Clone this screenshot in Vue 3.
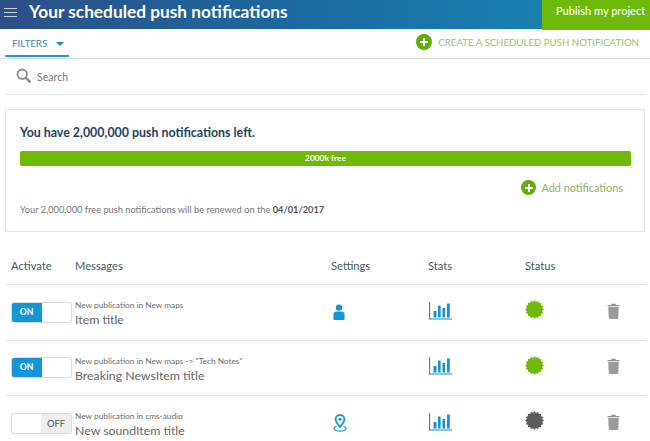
<template>
  <div class="page">
    <header class="topbar">
      <button class="burger" aria-label="Menu"><span></span><span></span><span></span></button>
      <h1 class="page-title">Your scheduled push notifications</h1>
      <button class="publish">Publish my project</button>
    </header>

    <div class="tabs">
      <div class="filters">FILTERS <i class="caret"></i></div>
      <div class="create">
        <span class="plus plus-big"></span>
        CREATE A SCHEDULED PUSH NOTIFICATION
      </div>
    </div>

    <div class="search">
      <svg width="15" height="15" viewBox="0 0 16 16" class="search-icon">
        <circle cx="6.6" cy="6.6" r="5" fill="none" stroke="#8c8c8c" stroke-width="2" />
        <path d="M10.4 10.4 L14.6 14.6" stroke="#8c8c8c" stroke-width="2.6" stroke-linecap="round" />
      </svg>
      <span>Search</span>
    </div>

    <section class="quota">
      <h2 class="quota-title">You have 2,000,000 push notifications left.</h2>
      <div class="bar">2000k free</div>
      <div class="add">
        <span class="plus"></span>
        Add notifications
      </div>
      <p class="renew">Your 2,000,000 free push notifications will be renewed on the <b>04/01/2017</b></p>
    </section>

    <div class="row head">
      <div>Activate</div>
      <div>Messages</div>
      <div>Settings</div>
      <div>Stats</div>
      <div>Status</div>
      <div></div>
    </div>

    <div class="row" v-for="item in items" :key="item.title">
      <div>
        <div class="toggle">
          <span class="toggle-on" v-if="item.on">ON</span>
          <span class="toggle-blank"></span>
          <span class="toggle-off" v-if="!item.on">OFF</span>
        </div>
      </div>
      <div class="msg">
        <div class="msg-sub">{{ item.sub }}</div>
        <div class="msg-title">{{ item.title }}</div>
      </div>
      <div class="settings">
        <svg v-if="item.icon === 'user'" width="12" height="16" viewBox="0 0 12 16">
          <circle cx="6" cy="3.6" r="3.2" fill="#1496d6" />
          <path d="M0.5 16 V10.5 Q0.5 7.6 3.4 7.6 H8.6 Q11.5 7.6 11.5 10.5 V16 Z" fill="#1496d6" />
        </svg>
        <svg v-if="item.icon === 'pin'" width="14" height="18" viewBox="0 0 14 18">
          <path d="M7 1 C4.2 1 2.6 3 2.6 5.2 C2.6 8 5.4 10.8 7 13 C8.6 10.8 11.4 8 11.4 5.2 C11.4 3 9.8 1 7 1 Z" fill="none" stroke="#1496d6" stroke-width="1.8" />
          <circle cx="7" cy="5.2" r="1.5" fill="#1496d6" />
          <path d="M3.4 12.6 C0.4 13.4 0.2 15.2 2.4 16.2 C4.8 17.2 9.2 17.2 11.6 16.2 C13.8 15.2 13.6 13.4 10.6 12.6" fill="none" stroke="#1496d6" stroke-width="1.1" />
        </svg>
      </div>
      <div>
        <svg width="23" height="18" viewBox="0 0 23 18" class="stats">
          <path d="M0.6 0 V17 H23" fill="none" stroke="#1b8cc4" stroke-width="1.1" />
          <rect x="4.5" y="9" width="3" height="6.5" fill="#1496d6" />
          <rect x="9" y="3.5" width="2.6" height="12" fill="#1496d6" />
          <rect x="13.5" y="6" width="2.6" height="9.5" fill="#1496d6" />
          <rect x="18" y="1.5" width="2.8" height="14" fill="#1496d6" />
        </svg>
      </div>
      <div>
        <svg width="19" height="19" viewBox="0 0 19 19" class="burst">
          <polygon :points="burstPoints" :fill="item.on ? '#6fb90a' : '#5c5c5c'" />
        </svg>
      </div>
      <div>
        <svg width="13" height="16" viewBox="0 0 13 16" class="trash">
          <path d="M0.5 2 H4.4 V0.8 H8.6 V2 H12.5 V3.2 H0.5 Z" fill="#8f8f8f" />
          <path d="M1.2 4 H11.8 L11.2 15.2 Q11.1 16 10.2 16 H2.8 Q1.9 16 1.8 15.2 Z" fill="#9a9a9a" />
        </svg>
      </div>
    </div>
  </div>
</template>

<script setup>
const items = [
  { on: true, sub: 'New publication in New maps', title: 'Item title', icon: 'user' },
  { on: true, sub: 'New publication in New maps -> "Tech Notes"', title: 'Breaking NewsItem title', icon: '' },
  { on: false, sub: 'New publication in cms-audio', title: 'New soundItem title', icon: 'pin' }
];

// 16 pointed burst for the status icons
const burstPoints = Array.from({ length: 32 }, (_, i) => {
  const r = i % 2 ? 7.7 : 9.5;
  const a = (i * Math.PI) / 16;
  return `${(9.5 + r * Math.sin(a)).toFixed(2)},${(9.5 - r * Math.cos(a)).toFixed(2)}`;
}).join(' ');
</script>

<style>
html,
body {
  margin: 0;
  background: #fff;
  overflow: hidden;
}
</style>

<style scoped>
.page {
  width: 650px;
  height: 441px;
  overflow: hidden;
  font-family: Lato, "Open Sans", sans-serif;
  color: #555;
}

.topbar {
  display: flex;
  align-items: flex-start;
  height: 29px;
  background: linear-gradient(90deg, #2d4f86 0%, #1a6ca3 50%, #1a8ab9 100%);
}

.burger {
  display: flex;
  flex-direction: column;
  gap: 3px;
  width: 13px;
  margin: 8px 0 0 4px;
  padding: 0;
  border: 0;
  background: none;
}

.burger span {
  display: block;
  height: 1px;
  background: #c4d2e4;
}

.page-title {
  flex: 1;
  margin: 0 0 0 12px;
  font-size: 17.3px;
  line-height: 23px;
  font-weight: 700;
  color: #fff;
}

.publish {
  width: 108px;
  height: 30px;
  padding: 0 0 9px 14px;
  border: 0;
  background: #6fb90a;
  color: #fff;
  font-family: inherit;
  font-size: 11px;
  font-weight: 500;
  text-align: left;
  white-space: nowrap;
}

.tabs {
  display: flex;
  justify-content: space-between;
  height: 30px;
  box-sizing: border-box;
  border-bottom: 1px solid #ddd;
}

.filters {
  width: 64px;
  height: 28px;
  box-sizing: border-box;
  margin-left: 5px;
  padding: 7px 0 0 7px;
  border-bottom: 2px solid #1ba0cc;
  font-size: 9.8px;
  line-height: 14px;
  color: #2e93b5;
}

.caret {
  display: inline-block;
  margin-left: 6px;
  border: 4px solid transparent;
  border-top: 4px solid #1b8fb8;
  border-bottom: 0;
  vertical-align: 1px;
}

.create {
  display: flex;
  align-items: center;
  height: 26px;
  margin-right: 11px;
  font-size: 9.67px;
  color: #9cc068;
}

.plus {
  position: relative;
  display: inline-block;
  width: 15px;
  height: 15px;
  margin-right: 5px;
  border-radius: 50%;
  background: #62ad0a;
}

.plus-big {
  width: 16px;
  height: 16px;
  margin-right: 6px;
}

.plus::before,
.plus::after {
  content: "";
  position: absolute;
  left: 50%;
  top: 50%;
  background: #fff;
  transform: translate(-50%, -50%);
}

.plus::before {
  width: 8px;
  height: 2px;
}

.plus::after {
  width: 2px;
  height: 8px;
}

.search {
  display: flex;
  align-items: center;
  gap: 6px;
  height: 36px;
  box-sizing: border-box;
  margin: 0 5px;
  padding: 0 0 0 11px;
  border-bottom: 1px solid #e2e2e2;
  font-size: 10.6px;
  color: #777;
}

.search-icon {
  margin-top: -2px;
}

.quota {
  box-sizing: border-box;
  height: 123px;
  margin: 14px 5px 0;
  padding: 14px 13px 0 14px;
  border: 1px solid #e4e4e4;
}

.quota-title {
  margin: 0;
  font-size: 12.4px;
  line-height: 17px;
  font-weight: 700;
  color: #1f4260;
}

.bar {
  height: 15px;
  margin-top: 10px;
  border-radius: 2px;
  background: #6fb90a;
  color: #fff;
  text-align: center;
  font-size: 8.4px;
  font-weight: 700;
  line-height: 15px;
}

.add {
  display: flex;
  align-items: center;
  justify-content: flex-end;
  margin: 14px 8px 0 0;
  height: 15px;
  font-size: 10.9px;
  color: #8cb365;
}

.renew {
  margin: 1px 0 0;
  font-size: 9.25px;
  line-height: 28px;
  color: #777;
}

.renew b {
  color: #555;
  font-weight: 700;
}

.row {
  display: grid;
  grid-template-columns: 64px 256px 97px 97px 81px 1fr;
  align-items: center;
  box-sizing: border-box;
  height: 55.5px;
  margin: 0 5px;
  padding-left: 6px;
  border-bottom: 1px solid #e2e2e2;
}

.head {
  height: 53px;
  font-size: 11.2px;
  color: #3f5a6c;
  padding-top: 15px;
}

.toggle {
  display: flex;
  width: 61px;
  height: 21px;
  box-sizing: border-box;
  border: 1px solid #d9d9d9;
  border-radius: 3px;
  overflow: hidden;
  font-size: 8.6px;
  font-weight: 700;
  line-height: 19px;
  text-align: center;
}

.toggle-on {
  width: 31px;
  margin: -1px 0 -1px -1px;
  line-height: 21px;
  background: #1496d6;
  color: #fff;
}

.toggle-blank {
  flex: 1;
}

.toggle-off {
  width: 30px;
  background: #eee;
  color: #555;
  font-size: 9.4px;
  font-weight: 400;
}

.msg {
  margin-top: 4px;
}

.msg-sub {
  font-size: 8.3px;
  line-height: 12px;
  color: #6c6c6c;
  white-space: nowrap;
}

.msg-title {
  font-size: 12.3px;
  line-height: 18px;
  color: #666;
  white-space: nowrap;
}

.settings {
  padding-left: 2px;
}

.settings svg,
.stats,
.burst,
.trash {
  display: block;
}

.stats {
  margin: -3px 0 0 1px;
}

.burst {
  margin-top: -5px;
}

.trash {
  margin: -3px 0 0 1px;
}
</style>
